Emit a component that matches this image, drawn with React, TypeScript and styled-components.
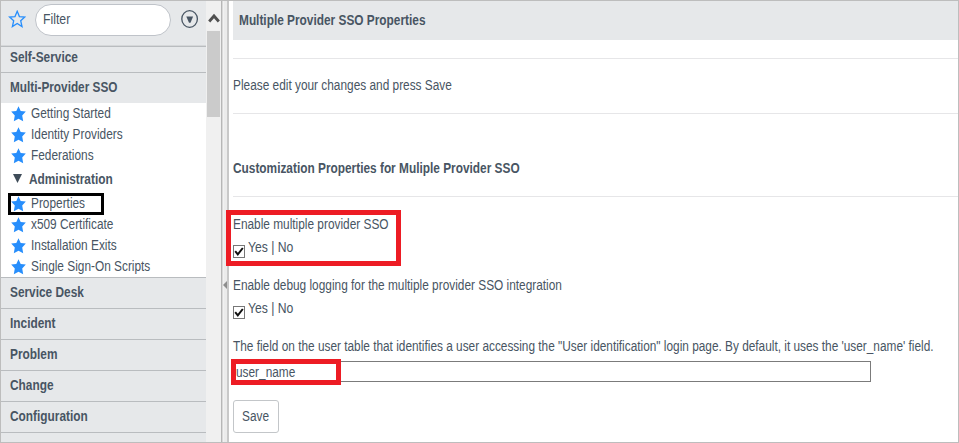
import React from "react";
import styled, { createGlobalStyle } from "styled-components";

const Global = createGlobalStyle`
  * { box-sizing: border-box; }
  body { margin: 0; background: #fff; overflow: hidden; }
  body, input, button { font-family: "Liberation Sans", Arial, sans-serif; font-size: 14px; color: #485563; }
`;

const Frame = styled.div`
  display: flex;
  width: 959px;
  height: 443px;
  overflow: hidden;
  border: 1px solid #bdbdbd;
`;

const Text = styled.span<{ $scale?: number; $bold?: boolean }>`
  display: inline-block;
  white-space: pre;
  line-height: 16px;
  font-weight: ${(p) => (p.$bold ? 700 : 400)};
  transform: translateY(-1px) scaleX(${(p) => p.$scale ?? 0.847});
  transform-origin: 0 50%;
`;

const Sidebar = styled.nav`
  flex: none;
  width: 205px;
  height: 441px;
  overflow: hidden;
  background: #e6e8ea;
`;

const FilterBar = styled.div`
  display: flex;
  align-items: flex-start;
  height: 46px;
  padding: 3px 0 0 7px;
  border-bottom: 1px solid #b9bcbf;
  box-shadow: inset 0 -1px 0 #d5d7d9;
`;

const FilterBox = styled.div`
  width: 136px;
  height: 32px;
  margin: 0 9px 0 9px;
  padding: 7px 0 0 7px;
  border: 1px solid #bfc3c9;
  border-radius: 16px;
  background: #fff;
`;

const IconSlot = styled.span<{ $top: number }>`
  display: flex;
  flex: none;
  margin-top: ${(p) => p.$top}px;
`;

const Section = styled.div<{ $height?: number; $pad?: number; $line?: boolean }>`
  height: ${(p) => p.$height ?? 31}px;
  padding: ${(p) => p.$pad ?? 7}px 0 0 9px;
  border-bottom: ${(p) => (p.$line === false ? 0 : 1)}px solid #b9bcbf;
`;

const Items = styled.div`
  height: 175px;
  padding-top: 1px;
  background: #fff;
  border-bottom: 1px solid #b9bcbf;
`;

const Item = styled.div<{ $height: number; $selected?: boolean }>`
  display: flex;
  align-items: center;
  height: ${(p) => p.$height}px;
  width: ${(p) => (p.$selected ? 96 : 190)}px;
  margin-left: 7px;
  padding-left: ${(p) => (p.$selected ? 0 : 3)}px;
  border: ${(p) => (p.$selected ? "3px solid #000" : "0")};
`;

const ItemIcon = styled.span<{ $group?: boolean }>`
  display: flex;
  flex: none;
  width: ${(p) => (p.$group ? 18 : 20)}px;
`;

const Scrollbar = styled.div`
  flex: none;
  width: 15px;
  background: #f0f0f0;
`;

const ScrollUp = styled.div`
  display: flex;
  justify-content: center;
  height: 30px;
  padding-top: 12px;
`;

const Thumb = styled.div`
  height: 86px;
  margin-left: 1px;
  width: 13px;
  background: #cbcbcb;
`;

const Splitter = styled.div`
  display: flex;
  align-items: center;
  flex: none;
  width: 8px;
  padding: 127px 0 0 1px;
  border-left: 1px solid #b6b6b6;
  border-right: 2px solid #c8c8c8;
  background: linear-gradient(90deg, #d9d9d9 0 1px, #f1f1f1 1px 2px, #ebebeb 2px);
`;

const Main = styled.main`
  flex: 1;
  min-width: 0;
  padding-left: 4px;
  background: #fff;
`;

const Title = styled.div`
  height: 39px;
  padding: 12px 0 0 6px;
  background: #e6e8ea;
`;

const Band = styled.div<{ $height: number; $pad?: number }>`
  height: ${(p) => p.$height}px;
  padding-top: ${(p) => p.$pad ?? 0}px;
  border-bottom: 1px solid #e6e6e8;
`;

const Highlight = styled.section`
  width: 175px;
  height: 56px;
  margin: 13px 0 0 -7px;
  padding: 2px 0 0 2px;
  border: 5px solid #ed1c24;
`;

const Debug = styled.section`
  height: 73px;
  padding-top: 12px;
`;

const Line = styled.div`
  height: 16px;
  white-space: nowrap;
`;

const CheckRow = styled.div`
  display: flex;
  height: 21px;
  margin-top: 7px;
`;

const CheckBox = styled.span`
  display: flex;
  flex: none;
  width: 12px;
  height: 13px;
  margin: 5px 3px 0 0;
  border: 1px solid #777;
  background: #fff;
`;

const Field = styled.div`
  display: flex;
  align-items: center;
  width: 638px;
  height: 21px;
  margin-top: 6px;
  border: 1px solid #7b7b7b;
`;

const FieldMark = styled.div`
  display: flex;
  align-items: center;
  flex: none;
  width: 110px;
  height: 26px;
  margin-left: -3px;
  padding-top: 2px;
  border: 5px solid #ed1c24;
  background: #fff;
`;

const SaveButton = styled.button`
  display: flex;
  align-items: center;
  width: 46px;
  height: 33px;
  margin: 18px 0 0;
  padding: 0 0 0 8px;
  border: 1px solid #c3c6c9;
  border-radius: 3px;
  background: #fff;
`;

const Star = () => (
  <svg width="15" height="16" viewBox="0 0 15 16">
    <path d="M7.5 0.3 9.7 5 14.8 5.5 11.2 9.4 12.2 15.3 7.5 12.8 2.8 15.3 3.8 9.4 0.2 5.5 5.3 5Z" fill="#278efc" />
  </svg>
);

const Check = () => (
  <svg width="10" height="11" viewBox="0 0 10 11">
    <path d="M1.2 5.2 3.8 8.4 8.8 2" fill="none" stroke="#111" strokeWidth="2" />
  </svg>
);

const YesNo = () => (
  <CheckRow>
    <CheckBox><Check /></CheckBox>
    <Text $scale={0.87}>Yes | No</Text>
  </CheckRow>
);

type Entry = { label: string; height: number; kind?: "group" | "selected" };

const entries: Entry[] = [
  { label: "Getting Started", height: 20 },
  { label: "Identity Providers", height: 21 },
  { label: "Federations", height: 21 },
  { label: "Administration", height: 27, kind: "group" },
  { label: "Properties", height: 22, kind: "selected" },
  { label: "x509 Certificate", height: 20 },
  { label: "Installation Exits", height: 21 },
  { label: "Single Sign-On Scripts", height: 21 },
];

export default function App() {
  return (
    <>
      <Global />
      <Frame>
        <Sidebar>
          <FilterBar>
            <IconSlot $top={6}>
              <svg width="18" height="18" viewBox="0 0 18 18">
                <path d="M9.2 1.3 11.4 6.6 16.8 7 12.7 10.7 14 16.6 9.2 13.5 4.4 16.6 5.7 10.7 1.6 7 7 6.6Z" fill="none" stroke="#278efc" strokeWidth="1.3" />
              </svg>
            </IconSlot>
            <FilterBox><Text $scale={0.875}>Filter</Text></FilterBox>
            <IconSlot $top={6}>
              <svg width="19" height="19" viewBox="0 0 19 19">
                <ellipse cx="9.6" cy="9" rx="7.8" ry="8.3" fill="none" stroke="#485563" strokeWidth="1.3" />
                <path d="M6.3 6.5H13.1L10.5 12.8H9Z" fill="#485563" />
              </svg>
            </IconSlot>
          </FilterBar>
          <Section $height={26} $pad={3}><Text $bold>Self-Service</Text></Section>
          <Section $height={30} $line={false}><Text $bold $scale={0.842}>Multi-Provider SSO</Text></Section>
          <Items>
            {entries.map((e) => (
              <Item key={e.label} $height={e.height} $selected={e.kind === "selected"}>
                <ItemIcon $group={e.kind === "group"}>
                  {e.kind === "group" ? (
                    <svg width="14" height="12" viewBox="0 0 14 12"><path d="M2 0H11L6.5 9Z" fill="#3f4c59" /></svg>
                  ) : <Star />}
                </ItemIcon>
                <Text $bold={e.kind === "group"}>{e.label}</Text>
              </Item>
            ))}
          </Items>
          {["Service Desk", "Incident", "Problem", "Change", "Configuration"].map((s) => (
            <Section key={s}><Text $bold>{s}</Text></Section>
          ))}
        </Sidebar>
        <Scrollbar>
          <ScrollUp>
            <svg width="12" height="11" viewBox="0 0 12 11"><path d="M1.2 8.5 6 3 10.8 8.5" fill="none" stroke="#505050" strokeWidth="2.8" /></svg>
          </ScrollUp>
          <Thumb />
        </Scrollbar>
        <Splitter>
          <svg width="4" height="8" viewBox="0 0 4 8"><path d="M4 0V8L0 4Z" fill="#8d8d8d" /></svg>
        </Splitter>
        <Main>
          <Title><Text $bold>Multiple Provider SSO Properties</Text></Title>
          <Band $height={19} />
          <Band $height={55} $pad={19}><Text>Please edit your changes and press Save</Text></Band>
          <Band $height={83} $pad={47}><Text $bold>Customization Properties for Muliple Provider SSO</Text></Band>
          <Highlight>
            <Line><Text>Enable multiple provider SSO</Text></Line>
            <YesNo />
          </Highlight>
          <Debug>
            <Line><Text>Enable debug logging for the multiple provider SSO integration</Text></Line>
            <YesNo />
          </Debug>
          <Line><Text $scale={0.8455}>{"The field on the user table that identifies a user accessing the \"User identification\" login page. By default, it uses the 'user_name' field."}</Text></Line>
          <Field><FieldMark><Text>user_name</Text></FieldMark></Field>
          <SaveButton type="button"><Text>Save</Text></SaveButton>
        </Main>
      </Frame>
    </>
  );
}
